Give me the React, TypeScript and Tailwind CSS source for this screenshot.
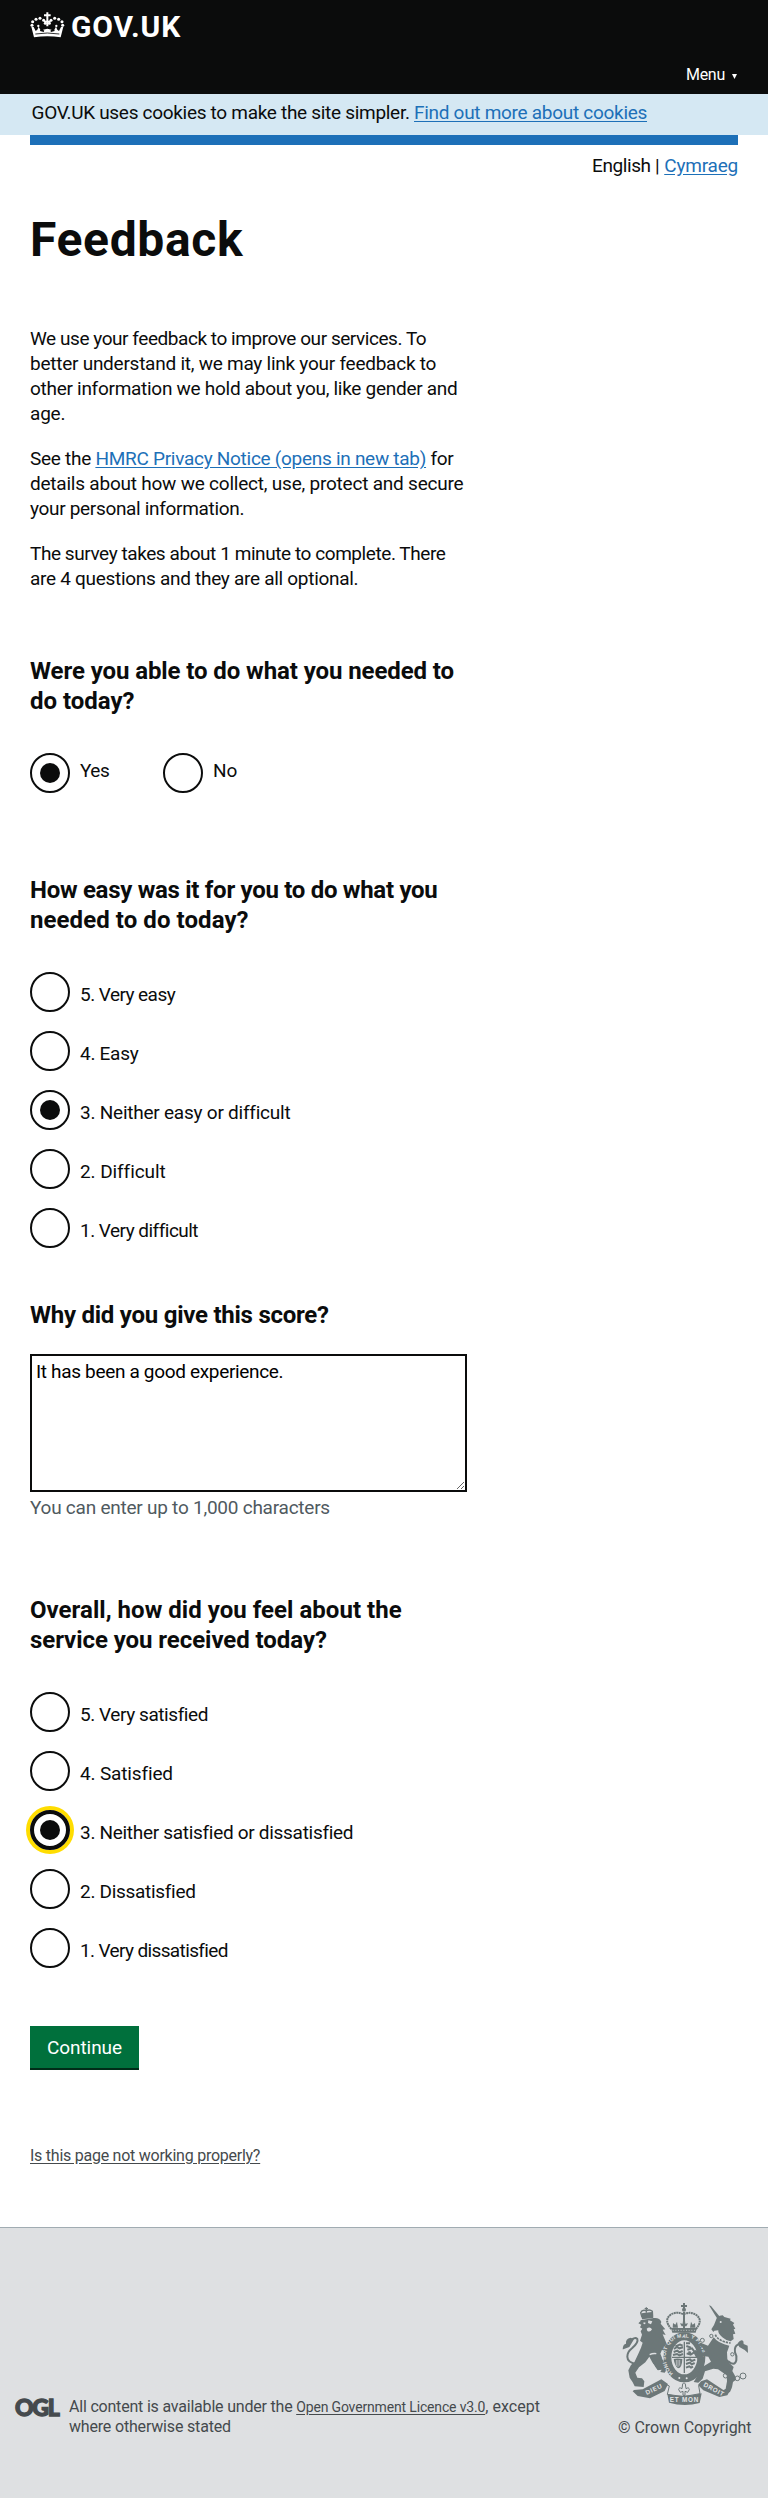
import React from 'react';

type Option = { label: string; tracking: string; checked?: boolean; focused?: boolean };

const easeOptions: Option[] = [
  { label: '5. Very easy', tracking: 'tracking-[-0.55px]' },
  { label: '4. Easy', tracking: 'tracking-[-0.28px]' },
  { label: '3. Neither easy or difficult', tracking: 'tracking-[-0.23px]', checked: true },
  { label: '2. Difficult', tracking: 'tracking-[-0.08px]' },
  { label: '1. Very difficult', tracking: 'tracking-[-0.52px]' },
];

const satisfactionOptions: Option[] = [
  { label: '5. Very satisfied', tracking: 'tracking-[-0.43px]' },
  { label: '4. Satisfied', tracking: 'tracking-[-0.15px]' },
  { label: '3. Neither satisfied or dissatisfied', tracking: 'tracking-[-0.3px]', checked: true, focused: true },
  { label: '2. Dissatisfied', tracking: 'tracking-[-0.3px]' },
  { label: '1. Very dissatisfied', tracking: 'tracking-[-0.63px]' },
];

function Crown() {
  const beads = [
    [96, 78],
    [98, 67],
    [108, 60],
    [120, 57],
    [131, 63],
    [136, 72],
    [148, 72],
    [153, 63],
    [164, 57],
    [176, 60],
    [186, 67],
    [188, 78],
  ];
  return (
    <svg viewBox="90 38 105 78" className="h-[26px] w-[35px]" fill="#fff">
      {beads.map(([x, y]) => (
        <circle key={`${x}-${y}`} cx={x} cy={y} r="4.6" />
      ))}
      <path d="M139 39h6v6h7v6h-7v13h7v5h-7v12h-6V69h-7v-5h7V51h-7v-6h7z" />
      <path d="M94 82l8 32q40-6 80 0l8-32-7 1-6 12-5-4-4-9-5 9 1 4-11 3-2-4 4-3-13-3-13 3 4 3-2 4-11-3 1-4-5-9-4 9-5 4-6-12z" />
      <path d="M106 104q36-6 72 0" stroke="#0b0c0c" strokeWidth="2.5" fill="none" />
      <circle cx="115" cy="80" r="3.5" />
      <circle cx="169" cy="80" r="3.5" />
    </svg>
  );
}

function Crest() {
  return (
    <svg viewBox="66 66 378 312" className="h-[104px] w-[126px]" fill="#6c7778" stroke="none">
      {/* lion */}
      <g>
        <path d="M124 100l32-4 4 18-34 4z" />
        <g fill="none" stroke="#6c7778" strokeWidth="4">
          <path d="M126 112l-4-14q4-10 16-6 12-5 19 2l1 16" />
          <path d="M139 82v16M134 86h10" />
        </g>
        <path d="M121 121l40-7q18-2 23 12l-2 5 14 17-8 1 9 16-9-2 10 24 5 6-7 2 10 12-4 14-16-12-5 12 10 24 8-2 4 22-9 13-13-2 4-7-12 2-13-18-12-23-12 17-19 15-11 16 6 15 14 2 7 9-2 17-27-2-6-12-9-14-4-22 8-16 10-8 12-26 8-18 5-15-8-6 6-18-4-10 5-8-7-4 4-8-9-4 7-7z" />
        <path d="M145 121l12 3-4 9-9-4zM131 127l6 1-2 5-5-2zM140 146q10-8 16 2-5 10-14 5z" fill="#dee0e2" />
        <path d="M149 224q10-5 20-3M150 246q12 8 14 18l8 10" stroke="#dee0e2" strokeWidth="4" fill="none" />
        <path d="M111 252q-29-4-29-22 0-14 14-25 20-18 16-28-7-7-20 4" fill="none" stroke="#6c7778" strokeWidth="6" />
        <path d="M68 208q1-16 10-17-2-15 14-18l10 5-14 23-18 7z" />
      </g>
      {/* crown */}
      <g>
        <circle cx="252" cy="89" r="6" />
        <path d="M249 69h6v6h6v6h-6v6h-6v-6h-6v-6h6z" />
        <path d="M249 96h6v50h-6z" />
        <path
          d="M214 147q-24-26-2-43 18-11 38-1 22-10 39 2 21 16-1 42"
          fill="none"
          stroke="#6c7778"
          strokeWidth="6"
          strokeDasharray="6 1.5"
        />
        <path d="M213 144h78l-4 14h-70z" />
        <path d="M245 139l-5-9 8 1 1-9h6l1 9 8-1-5 9zM218 143l1-14 7 5 5-9 3 18zM286 143l-1-14-7 5-5-9-3 18z" />
        <path d="M218 151h68" stroke="#dee0e2" strokeWidth="2" strokeDasharray="3 5" />
      </g>
      {/* garter and shield */}
      <g>
        <ellipse cx="253" cy="232" rx="51" ry="63" fill="none" stroke="#6c7778" strokeWidth="24" />
        <path id="garter" d="M219 280A46 58 0 0 1 253 174A46 58 0 0 1 289 278" fill="none" />
        <text fill="#e4e6e7" className="font-['Liberation_Sans'] text-[15px] font-bold">
          <textPath href="#garter" textLength="238">
            HONI SOIT QUI MAL Y PENSE
          </textPath>
        </text>
        <ellipse cx="253" cy="232" rx="37" ry="48" fill="#dee0e2" />
        <path d="M253 185v94M216 232h74" stroke="#6c7778" strokeWidth="4" />
        <g fill="none" stroke="#6c7778" strokeWidth="6">
          <path d="M222 207l9-6 7 4 11-3M221 216l11-4 6 5 10-4M219 225l12-3 7 4 11-4M226 199l14-5 8 3" />
          <path d="M259 198l14 5M262 209l14-4 8 11-12 8-12-4M265 216l8 2M258 190h12" />
          <path d="M258 242l12-4 5 5 11-4M258 252l12-4 5 5 9-4M258 263l10-4 5 4 6-3" />
        </g>
        <path d="M221 237q10-3 26 0-1 28-13 28-10-7-13-28z" />
        <path d="M229 240v18M234 240v21M239 240v17" stroke="#dee0e2" strokeWidth="2" />
        <circle cx="238" cy="294" r="3" fill="#e4e6e7" />
        <circle cx="260" cy="295" r="3" fill="#e4e6e7" />
      </g>
      {/* unicorn */}
      <g>
        <path d="M327 76l6 2 27 33-8 5z" />
        <path d="M334 148l8-13 8-20 9-8 9-1 5 5 19 5-2 5 13 8-4 5 7 12-5 2 5 13-7 2 2 14-9 7q-14-2-25-12-14-12-12-21l-12 1-3 4z" />
        <circle cx="362" cy="126" r="3" fill="#dee0e2" />
        <path d="M346 164q8 20 46 25" stroke="#6c7778" strokeWidth="5" strokeDasharray="7 3" fill="none" />
        <path d="M341 172q14 19 47 25l-7 20 1 20 7 13 12 11-4 12 8 14 3 12-9 7-3 16-6 14-17 6-9-5 13-11 4-22-1-18-26-18-14-2-25 8-7 22-13 12-14-2 9-14 9-28 12-5 22-14-8-15-16-2-3 12-17-6-10-19 8-5 14 9 15-3-8-13-14-9 8-6 22 9z" />
        <path d="M384 243q20 18 25-2 2-14-4-24-3-19 10-24 13 0 17 12" fill="none" stroke="#6c7778" strokeWidth="6" />
        <path d="M413 190q11-15 17-6l1 8 12 5 1 22-10-9-16-9z" />
        <g fill="none" stroke="#6c7778" strokeWidth="3">
          <circle cx="328" cy="211" r="6" />
          <circle cx="334" cy="168" r="5" />
          <circle cx="307" cy="181" r="6" />
          <circle cx="377" cy="287" r="7" />
          <circle cx="391" cy="299" r="6" />
          <circle cx="412" cy="295" r="7" />
          <circle cx="429" cy="288" r="9" />
          <circle cx="397" cy="223" r="5" />
        </g>
      </g>
      {/* motto ribbon and lily */}
      <g>
        <path d="M102 330l26-2 56-30 20 14-10 21-44 22-37-7-15-14zM303 304l18-6 49 32 24-5-12 21-24 5-48-20-16-16z" />
        <path d="M190 328q8-18 18-10l-6 25 48 7 50-9-4-24q10-6 16 9" fill="none" stroke="#6c7778" strokeWidth="3" />
        <path d="M202 342q50 12 103-2l-6 29q-46 13-92-1z" />
        <path
          d="M248 312q4-8 8 0l2 14q9-6 10 3l-5 8-8-3v12h-6v-12l-8 3-5-8q1-9 10-3z"
          fill="none"
          stroke="#6c7778"
          strokeWidth="3"
        />
        <g fill="#e4e6e7" className="font-['Liberation_Sans'] text-[19px] font-bold">
          <text x="140" y="345" transform="rotate(-25 140 345)" textLength="52">
            DIEU
          </text>
          <text x="209" y="366" textLength="86">
            ET MON
          </text>
          <text x="309" y="318" transform="rotate(28 309 318)" textLength="66">
            DROIT
          </text>
        </g>
      </g>
    </svg>
  );
}

function Radio({ checked, focused }: { checked?: boolean; focused?: boolean }) {
  return (
    <span
      className={
        focused
          ? 'flex size-10 shrink-0 items-center justify-center rounded-full border-4 border-[#0b0c0c] shadow-[0_0_0_4px_#ffdd00]'
          : 'flex size-10 shrink-0 items-center justify-center rounded-full border-2 border-[#0b0c0c]'
      }
    >
      {checked && <span className="size-5 rounded-full bg-[#0b0c0c]" />}
    </span>
  );
}

function RadioList({ options }: { options: Option[] }) {
  return (
    <div className="mt-[37px] flex flex-col gap-[19px]">
      {options.map((o) => (
        <label key={o.label} className="flex h-10 gap-[10px]">
          <Radio checked={o.checked} focused={o.focused} />
          <span className={`pt-[10px] ${o.tracking}`}>{o.label}</span>
        </label>
      ))}
    </div>
  );
}

export default function App() {
  return (
    <div className="min-h-[2498px] bg-white font-['Roboto','Liberation_Sans',sans-serif] text-[19px] leading-[25px] whitespace-nowrap text-[#0b0c0c]">
      <header className="flex h-[94px] flex-col bg-[#0b0c0c] px-[30px] pt-3 text-white">
        <a className="flex h-[30px] items-start">
          <Crown />
          <span className="ml-[6px] text-[30px] leading-[30px] font-bold tracking-[0.9px]">GOV.UK</span>
        </a>
        <div className="mt-[23px] flex items-center justify-end text-[16px] leading-5">
          <span className="tracking-[-0.26px]">Menu</span>
          <svg viewBox="0 0 5 5" className="mt-[3px] mr-px ml-[7px] size-[5px]" fill="#fff">
            <path d="M0 0h5L2.5 5z" />
          </svg>
        </div>
      </header>

      <div className="h-[41px] bg-[#d5e8f3] pt-[6px] pl-[31.5px]">
        <span className="tracking-[-0.3px]">GOV.UK uses cookies to make the site simpler. </span>
        <a className="tracking-[-0.29px] text-[#1d70b8] underline underline-offset-2">Find out more about cookies</a>
      </div>

      <main className="px-[30px]">
        <div className="h-[10px] bg-[#1d70b8]" />
        <div className="mt-2 flex justify-end">
          <span className="mr-[5px] tracking-[-0.4px]">English |</span>
          <a className="tracking-[-0.2px] text-[#1d70b8] underline underline-offset-2">Cymraeg</a>
        </div>

        <h1 className="mt-[37px] text-[48px] leading-[50px] font-bold tracking-[0.65px]">Feedback</h1>

        <p className="mt-[61px]">
          <span className="block tracking-[-0.45px]">We use your feedback to improve our services. To</span>
          <span className="block tracking-[-0.25px]">better understand it, we may link your feedback to</span>
          <span className="block tracking-[-0.28px]">other information we hold about you, like gender and</span>
          <span className="block tracking-[-0.19px]">age.</span>
        </p>
        <p className="mt-5">
          <span className="block tracking-[-0.28px]">
            See the{' '}
            <a className="text-[#1d70b8] underline underline-offset-2">HMRC Privacy Notice (opens in new tab)</a> for
          </span>
          <span className="block tracking-[-0.22px]">details about how we collect, use, protect and secure</span>
          <span className="block tracking-[-0.32px]">your personal information.</span>
        </p>
        <p className="mt-5">
          <span className="block tracking-[-0.43px]">The survey takes about 1 minute to complete. There</span>
          <span className="block tracking-[-0.29px]">are 4 questions and they are all optional.</span>
        </p>

        <h2 className="mt-[65px] text-[24px] leading-[30px] font-bold">
          <span className="block tracking-[-0.09px]">Were you able to do what you needed to</span>
          <span className="block tracking-[-0.02px]">do today?</span>
        </h2>
        <div className="mt-[37px] flex h-10">
          <label className="flex w-[133px] gap-[10px]">
            <Radio checked />
            <span className="pt-[5px] tracking-[-0.5px]">Yes</span>
          </label>
          <label className="flex gap-[10px]">
            <Radio />
            <span className="pt-[5px]">No</span>
          </label>
        </div>

        <h2 className="mt-[82px] text-[24px] leading-[30px] font-bold">
          <span className="block tracking-[-0.29px]">How easy was it for you to do what you</span>
          <span className="block tracking-[0.07px]">needed to do today?</span>
        </h2>
        <RadioList options={easeOptions} />

        <h2 className="mt-[52px] text-[24px] leading-[30px] font-bold tracking-[-0.25px]">
          Why did you give this score?
        </h2>
        <textarea
          className="mt-6 block h-[138px] w-[437px] resize border-2 border-[#0b0c0c] bg-white px-1 py-[3px] tracking-[-0.33px] text-black"
          defaultValue="It has been a good experience."
        />
        <p className="mt-[3px] tracking-[-0.24px] text-[#505a5f]">You can enter up to 1,000 characters</p>

        <h2 className="mt-[75px] text-[24px] leading-[30px] font-bold">
          <span className="block tracking-[0.03px]">Overall, how did you feel about the</span>
          <span className="block tracking-[-0.06px]">service you received today?</span>
        </h2>
        <RadioList options={satisfactionOptions} />

        <button className="mt-[58px] block h-[44px] w-[109px] border-b-2 border-[#002d18] bg-[#00703c] pt-px tracking-[-0.07px] text-white">
          Continue
        </button>

        <a className="mt-[76px] block text-[16px] leading-5 tracking-[-0.25px] text-[#454a4d] underline underline-offset-2">
          Is this page not working properly?
        </a>
      </main>

      <footer className="mt-[61px] flex h-[271px] border-t border-[#a1acb2] bg-[#dee0e2] text-[16px] leading-5 text-[#454a4d]">
        <div className="flex grow pt-[169px] pl-[15px]">
          <span className="w-[54px] font-['Lato','Roboto',sans-serif] text-[23px] leading-5 font-black tracking-[-1.3px] [-webkit-text-stroke:1.3px_#454a4d]">
            OGL
          </span>
          <p>
            <span className="tracking-[-0.2px]">All content is available under the </span>
            <a className="text-[14px] tracking-[-0.16px] underline underline-offset-2">Open Government Licence v3.0</a>
            <span className="tracking-[0.05px]">, except</span>
            <span className="block tracking-[-0.18px]">where otherwise stated</span>
          </p>
        </div>
        <div className="w-[150px] pt-[74px]">
          <div className="pl-1">
            <Crest />
          </div>
          <p className="mt-[12px] tracking-[-0.06px]">© Crown Copyright</p>
        </div>
      </footer>
    </div>
  );
}
